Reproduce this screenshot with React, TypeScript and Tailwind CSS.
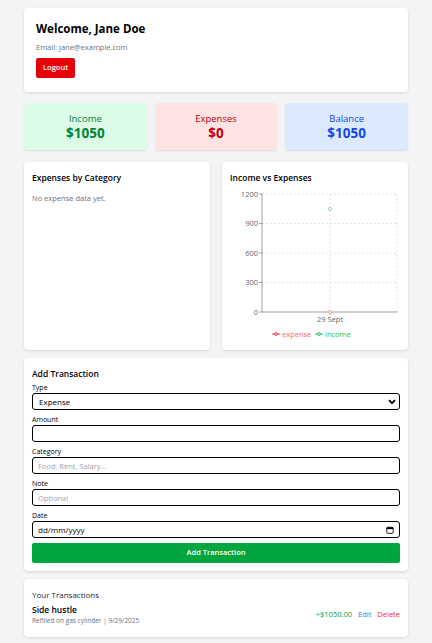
import type { ReactNode } from "react";

function Card({ children, className = "" }: { children: ReactNode; className?: string }) {
  return (
    <div className={`rounded-[4px] bg-white shadow-[0_1px_3px_rgba(0,0,0,0.12)] ${className}`}>
      {children}
    </div>
  );
}

function Stat({ label, value, tone }: { label: string; value: string; tone: "green" | "red" | "blue" }) {
  const styles = {
    green: "bg-[#dcfce7] text-[#008236]",
    red: "bg-[#ffe2e2] text-[#c10007]",
    blue: "bg-[#dbeafe] text-[#1447e6]",
  }[tone];
  return (
    <div className={`flex h-[47px] flex-col items-center justify-center rounded-[4px] shadow-[0_1px_2px_rgba(0,0,0,0.1)] ${styles}`}>
      <span className="text-[9.5px] leading-[13px]">{label}</span>
      <span className="text-[13.5px] font-bold leading-[17px]">{value}</span>
    </div>
  );
}

function Field({ label, children }: { label: string; children: ReactNode }) {
  return (
    <div className="flex flex-col">
      <label className="block text-[7px] leading-[10px] text-black">{label}</label>
      {children}
    </div>
  );
}

const inputCls =
  "block h-[17px] w-full rounded-[3px] border-[1.5px] border-black bg-white px-[5px] text-[7.5px] text-black outline-none placeholder:text-[#9ca3af]";

function IncomeChart() {
  const ticks = [
    { v: "1200", y: 6 },
    { v: "900", y: 35.5 },
    { v: "600", y: 65 },
    { v: "300", y: 94.5 },
    { v: "0", y: 124 },
  ];
  return (
    <svg width="170" height="156" viewBox="0 0 170 156" className="block">
      {ticks.slice(0, 4).map((t) => (
        <line key={t.v} x1="32" x2="167" y1={t.y} y2={t.y} stroke="#ddd" strokeDasharray="2 2" strokeWidth="0.8" />
      ))}
      <line x1="100" x2="100" y1="6" y2="124" stroke="#ddd" strokeDasharray="2 2" strokeWidth="0.8" />
      <line x1="167" x2="167" y1="6" y2="124" stroke="#ddd" strokeDasharray="2 2" strokeWidth="0.8" />
      <line x1="32" x2="32" y1="6" y2="124" stroke="#888" strokeWidth="0.8" />
      <line x1="32" x2="167" y1="124" y2="124" stroke="#888" strokeWidth="0.8" />
      {ticks.map((t) => (
        <g key={t.v}>
          <line x1="29" x2="32" y1={t.y} y2={t.y} stroke="#888" strokeWidth="0.8" />
          <text x="28" y={t.y + 2.5} textAnchor="end" fontSize="7.5" fill="#666">
            {t.v}
          </text>
        </g>
      ))}
      <line x1="100" x2="100" y1="124" y2="127" stroke="#888" strokeWidth="0.8" />
      <text x="100" y="134" textAnchor="middle" fontSize="7.5" fill="#666">
        29 Sept
      </text>
      <circle cx="100" cy="21" r="1.6" fill="#fff" stroke="#82ca9d" strokeWidth="0.8" />
      <circle cx="100" cy="124" r="1.6" fill="#fff" stroke="#ff8a8a" strokeWidth="0.8" />
      <g>
        <line x1="42" x2="50" y1="146" y2="146" stroke="#e7000b" strokeWidth="0.8" />
        <circle cx="46" cy="146" r="1.4" fill="#fff" stroke="#e7000b" strokeWidth="0.8" />
        <text x="52" y="148.5" fontSize="7.5" fill="#ff6467">
          expense
        </text>
        <line x1="85" x2="93" y1="146" y2="146" stroke="#00a63e" strokeWidth="0.8" />
        <circle cx="89" cy="146" r="1.4" fill="#fff" stroke="#00a63e" strokeWidth="0.8" />
        <text x="95" y="148.5" fontSize="7.5" fill="#00c950">
          income
        </text>
      </g>
    </svg>
  );
}

export default function App() {
  return (
    <div className="min-h-[643px] bg-[#f3f4f6] font-['Open_Sans',sans-serif] text-black">
      <div className="mx-auto flex max-w-[384px] flex-col pt-[8px] pb-[6px]">
        <Card className="h-[84px] px-[12px] pt-[12px]">
          <h1 className="text-[11.5px] font-bold leading-[18px]">Welcome, Jane Doe</h1>
          <p className="mt-[4px] text-[7.5px] leading-[10px] text-[#6a7282]">Email: jane@example.com</p>
          <button className="mt-[6px] h-[20px] rounded-[2px] bg-[#e7000b] px-[7px] text-[7.5px] font-semibold text-white">
            Logout
          </button>
        </Card>

        <div className="mt-[11px] grid grid-cols-3 gap-[8px]">
          <Stat label="Income" value="$1050" tone="green" />
          <Stat label="Expenses" value="$0" tone="red" />
          <Stat label="Balance" value="$1050" tone="blue" />
        </div>

        <div className="mt-[12px] grid grid-cols-2 gap-[12px]">
          <Card className="h-[188px] px-[8px] pt-[9px]">
            <h2 className="text-[8.5px] font-semibold leading-[14px]">Expenses by Category</h2>
            <p className="mt-[8px] text-[7.5px] text-[#6a7282]">No expense data yet.</p>
          </Card>
          <Card className="h-[188px] px-[8px] pt-[9px]">
            <h2 className="text-[8.5px] font-semibold leading-[14px]">Income vs Expenses</h2>
            <div className="mt-[3px]">
              <IncomeChart />
            </div>
          </Card>
        </div>

        <Card className="mt-[8px] px-[8px] pt-[9px] pb-[8px]">
          <h2 className="text-[8.5px] font-semibold leading-[14px]">Add Transaction</h2>
          <div className="mt-[2px] flex flex-col gap-[5px]">
            <Field label="Type">
              <div className="relative">
                <select className={`${inputCls} appearance-none px-[6px] text-[8px]`} defaultValue="expense">
                  <option value="expense">Expense</option>
                  <option value="income">Income</option>
                </select>
                <svg className="pointer-events-none absolute right-[4px] top-[6px]" width="8" height="6" viewBox="0 0 8 6">
                  <path d="M1 1.2 L4 4.2 L7 1.2" fill="none" stroke="#000" strokeWidth="1.8" />
                </svg>
              </div>
            </Field>
            <Field label="Amount">
              <input className={inputCls} />
            </Field>
            <Field label="Category">
              <input className={inputCls} placeholder="Food, Rent, Salary..." />
            </Field>
            <Field label="Note">
              <input className={inputCls} placeholder="Optional" />
            </Field>
            <Field label="Date">
              <div className={`${inputCls} flex items-center justify-between`}>
                <span className="text-[8px]">dd/mm/yyyy</span>
                <svg width="8" height="8" viewBox="0 0 8 8">
                  <rect x="0.8" y="1.3" width="6.4" height="6" rx="0.8" fill="none" stroke="#000" strokeWidth="0.9" />
                  <rect x="0.8" y="1.3" width="6.4" height="1.8" fill="#000" />
                </svg>
              </div>
            </Field>
            <button className="h-[20px] w-full rounded-[2px] bg-[#00a63e] text-[7.5px] font-semibold text-white">
              Add Transaction
            </button>
          </div>
        </Card>

        <Card className="mt-[8px] px-[8px] pt-[10px] pb-[11px]">
          <h3 className="text-[8px] leading-[12px] text-[#1e2939]">Your Transactions</h3>
          <div className="mt-[3px] flex items-center justify-between">
            <div>
              <p className="text-[8.5px] font-semibold leading-[12px]">Side hustle</p>
              <p className="text-[6.5px] leading-[10px] text-[#6a7282]">Refilled on gas cylinder | 9/29/2025</p>
            </div>
            <div className="flex items-center gap-[6px] text-[7.5px]">
              <span className="text-[#00a63e]">+$1050.00</span>
              <span className="text-[#2b7fff]">Edit</span>
              <span className="text-[#fb2c36]">Delete</span>
            </div>
          </div>
        </Card>
      </div>
    </div>
  );
}
